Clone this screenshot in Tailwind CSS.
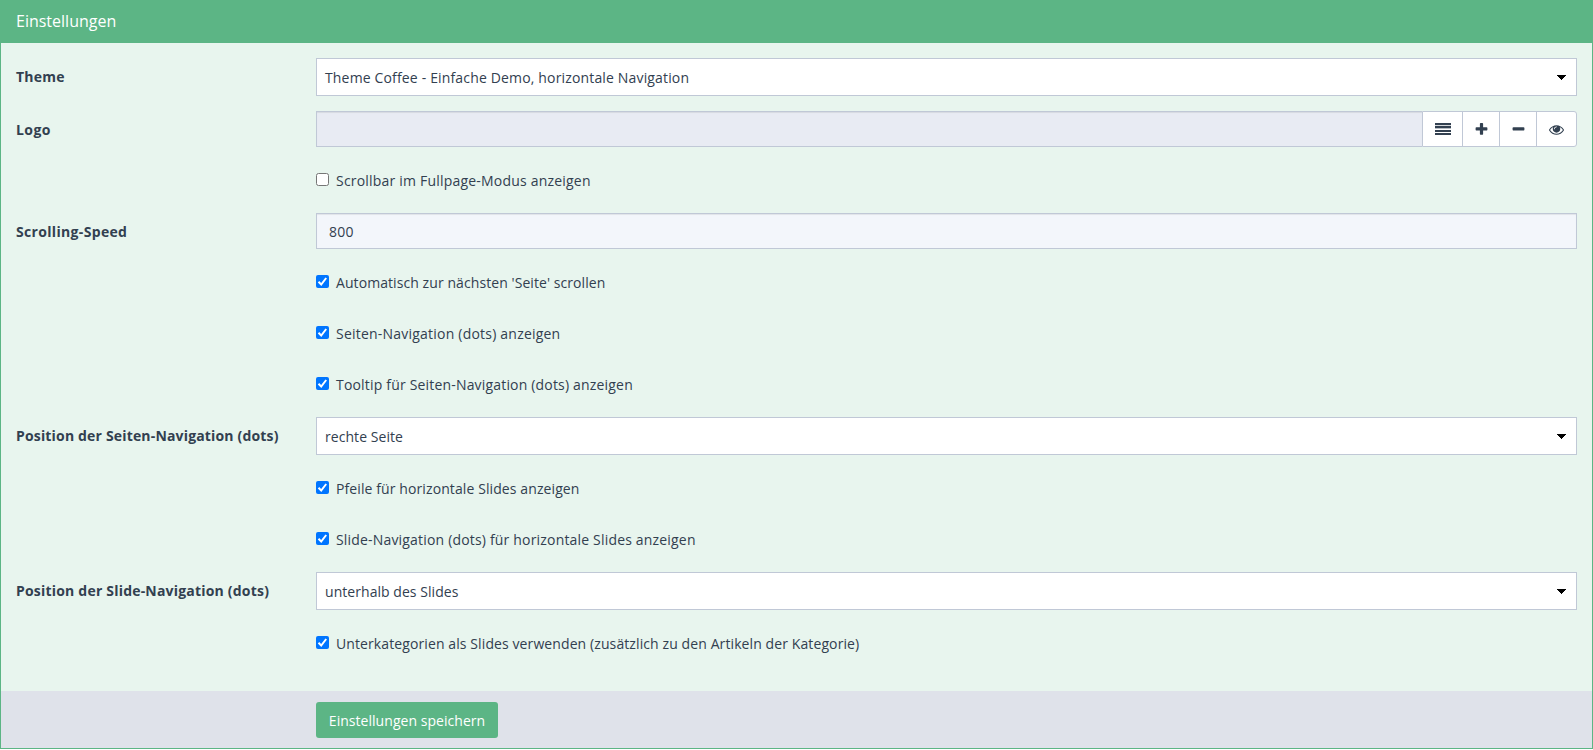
<!DOCTYPE html>
<html lang="de">
<head>
<meta charset="utf-8">
<title>Einstellungen</title>
<script src="https://cdn.jsdelivr.net/npm/@tailwindcss/browser@4"></script>
</head>
<body class="bg-white font-['Open_Sans','Noto_Sans',sans-serif] text-[14px] text-[#324050]">
<section class="h-[749px] border border-[#5cb585] bg-[#e8f5ee]">
  <header class="flex h-[42px] items-center bg-[#5cb585] px-[15px] pb-[3px] text-[16px] text-white"><span>Einstellungen</span></header>
  <form class="flex flex-col">
    <div class="flex flex-col gap-[15px] px-[15px] pt-[15px] pb-[30px]">
      <div class="flex h-[38px]">
        <label class="w-[300px] pt-[9px] leading-5 font-bold tracking-[0.2px]">Theme</label>
        <div class="flex flex-1 items-center justify-between border border-[#c0c8d6] bg-white pr-[10px] pl-2"><span class="tracking-[0.157px]">Theme Coffee - Einfache Demo, horizontale Navigation</span><svg class="h-[5px] w-[9px]" viewBox="0 0 9 5"><path fill="#000" d="M0 0h9v1H8v1H7v1H6v1H5v1H4V4H3V3H2V2H1V1H0z"/></svg></div>
      </div>
      <div class="flex h-9">
        <label class="w-[300px] pt-[9px] leading-5 font-bold tracking-[0.45px]">Logo</label>
        <div class="flex flex-1">
          <div class="flex-1 border border-r-0 border-[#c0c8d6] bg-[#e8ebf3] shadow-[inset_0_1px_1px_rgba(0,0,0,0.075)]"></div>
          <div class="flex w-[155px] rounded-r-[3px] border border-[#c0c8d6] bg-white text-[#324050]">
            <button type="button" aria-label="Auswählen" class="flex w-10 items-center justify-center border-r border-[#c0c8d6]"><svg class="h-[15px] w-4" viewBox="0 0 16 15" fill="currentColor"><path d="M0 1h16v2H0zM0 4h16v2H0zM0 8h16v2H0zM0 11h16v2H0z"/><path d="M0 6h16v1H0z" opacity=".35"/><path d="M0 3h16v1H0z" opacity=".2"/></svg></button>
            <button type="button" aria-label="Hinzufügen" class="flex w-[37px] items-center justify-center border-r border-[#c0c8d6]"><svg class="size-[15px]" viewBox="0 0 1792 1792" fill="currentColor"><path d="M1600 736v192q0 40-28 68t-68 28h-416v416q0 40-28 68t-68 28h-192q-40 0-68-28t-28-68v-416h-416q-40 0-68-28t-28-68v-192q0-40 28-68t68-28h416v-416q0-40 28-68t68-28h192q40 0 68 28t28 68v416h416q40 0 68 28t28 68z"/></svg></button>
            <button type="button" aria-label="Entfernen" class="flex w-[37px] items-center justify-center border-r border-[#c0c8d6]"><svg class="size-[15px]" viewBox="0 0 1792 1792" fill="currentColor"><path d="M1600 736v192q0 40-28 68t-68 28h-1216q-40 0-68-28t-28-68v-192q0-40 28-68t68-28h1216q40 0 68 28t28 68z"/></svg></button>
            <button type="button" aria-label="Ansehen" class="flex flex-1 items-center justify-center pt-px"><svg class="size-[15px]" viewBox="0 0 1792 1792" fill="currentColor"><path d="M1664 960q-152-236-381-353 61 104 61 225 0 185-131.500 316.500t-316.500 131.500-316.500-131.500-131.500-316.500q0-121 61-225-229 117-381 353 133 205 333.500 326.500t434.500 121.500 434.500-121.500 333.500-326.500zm-720-384q0-20-14-34t-34-14q-125 0-214.500 89.500t-89.500 214.500q0 20 14 34t34 14 34-14 14-34q0-86 61-147t147-61q20 0 34-14t14-34zm848 384q0 34-20 69-140 230-376.500 368.500t-499.500 138.500-499.500-139-376.500-368q-20-35-20-69t20-69q140-229 376.500-368t499.500-139 499.500 139 376.500 368q20 35 20 69z"/></svg></button>
          </div>
        </div>
      </div>
      <label class="ml-[300px] flex h-9 pt-[11px]"><svg class="mr-[7px] size-[13px]" viewBox="0 0 13 13"><rect x=".5" y=".5" width="12" height="12" rx="2" fill="#fff" stroke="#767676"/></svg><span class="-mt-[2px] leading-5 tracking-[0.2px]">Scrollbar im Fullpage-Modus anzeigen</span></label>
      <div class="flex h-9">
        <label class="w-[300px] pt-[9px] leading-5 font-bold tracking-[0.33px]">Scrolling-Speed</label>
        <div class="flex-1 border border-[#c0c8d6] bg-[#f3f6fb] px-3 pt-2 leading-5 tracking-[0.3px] shadow-[inset_0_1px_1px_rgba(0,0,0,0.075)]">800</div>
      </div>
      <label class="ml-[300px] flex h-9 pt-[11px]"><svg class="mr-[7px] size-[13px]" viewBox="0 0 13 13"><rect width="13" height="13" rx="2" fill="#0075ff"/><path d="M2.500 6.800l2.700 2.700 5-6.500" fill="none" stroke="#fff" stroke-width="2"/></svg><span class="-mt-[2px] leading-5 tracking-[0.075px]">Automatisch zur nächsten 'Seite' scrollen</span></label>
      <label class="ml-[300px] flex h-9 pt-[11px]"><svg class="mr-[7px] size-[13px]" viewBox="0 0 13 13"><rect width="13" height="13" rx="2" fill="#0075ff"/><path d="M2.500 6.800l2.700 2.700 5-6.500" fill="none" stroke="#fff" stroke-width="2"/></svg><span class="-mt-[2px] leading-5 tracking-[0.215px]">Seiten-Navigation (dots) anzeigen</span></label>
      <label class="ml-[300px] flex h-9 pt-[11px]"><svg class="mr-[7px] size-[13px]" viewBox="0 0 13 13"><rect width="13" height="13" rx="2" fill="#0075ff"/><path d="M2.500 6.800l2.700 2.700 5-6.500" fill="none" stroke="#fff" stroke-width="2"/></svg><span class="-mt-[2px] leading-5 tracking-[0.18px]">Tooltip für Seiten-Navigation (dots) anzeigen</span></label>
      <div class="flex h-[38px]">
        <label class="w-[300px] pt-[9px] leading-5 font-bold tracking-[0.17px]">Position der Seiten-Navigation (dots)</label>
        <div class="flex flex-1 items-center justify-between border border-[#c0c8d6] bg-white pr-[10px] pl-2"><span class="tracking-[0.06px]">rechte Seite</span><svg class="h-[5px] w-[9px]" viewBox="0 0 9 5"><path fill="#000" d="M0 0h9v1H8v1H7v1H6v1H5v1H4V4H3V3H2V2H1V1H0z"/></svg></div>
      </div>
      <label class="ml-[300px] flex h-9 pt-[11px]"><svg class="mr-[7px] size-[13px]" viewBox="0 0 13 13"><rect width="13" height="13" rx="2" fill="#0075ff"/><path d="M2.500 6.800l2.700 2.700 5-6.500" fill="none" stroke="#fff" stroke-width="2"/></svg><span class="-mt-[2px] leading-5 tracking-[0.1px]">Pfeile für horizontale Slides anzeigen</span></label>
      <label class="ml-[300px] flex h-9 pt-[11px]"><svg class="mr-[7px] size-[13px]" viewBox="0 0 13 13"><rect width="13" height="13" rx="2" fill="#0075ff"/><path d="M2.500 6.800l2.700 2.700 5-6.500" fill="none" stroke="#fff" stroke-width="2"/></svg><span class="-mt-[2px] leading-5 tracking-[0.18px]">Slide-Navigation (dots) für horizontale Slides anzeigen</span></label>
      <div class="flex h-[38px]">
        <label class="w-[300px] pt-[9px] leading-5 font-bold tracking-[0.2px]">Position der Slide-Navigation (dots)</label>
        <div class="flex flex-1 items-center justify-between border border-[#c0c8d6] bg-white pr-[10px] pl-2"><span class="tracking-[0.05px]">unterhalb des Slides</span><svg class="h-[5px] w-[9px]" viewBox="0 0 9 5"><path fill="#000" d="M0 0h9v1H8v1H7v1H6v1H5v1H4V4H3V3H2V2H1V1H0z"/></svg></div>
      </div>
      <label class="ml-[300px] flex h-9 pt-[11px]"><svg class="mr-[7px] size-[13px]" viewBox="0 0 13 13"><rect width="13" height="13" rx="2" fill="#0075ff"/><path d="M2.500 6.800l2.700 2.700 5-6.500" fill="none" stroke="#fff" stroke-width="2"/></svg><span class="-mt-[2px] leading-5 tracking-[0.1px]">Unterkategorien als Slides verwenden (zusätzlich zu den Artikeln der Kategorie)</span></label>
    </div>
    <footer class="h-[57px] bg-[#dfe2ea] pt-[11px] pl-[315px]">
      <button type="button" class="flex h-9 w-[182px] items-center justify-center rounded-[3px] bg-[#5cb585] text-white"><span class="tracking-[0.04px]">Einstellungen speichern</span></button>
    </footer>
  </form>
</section>
</body>
</html>
